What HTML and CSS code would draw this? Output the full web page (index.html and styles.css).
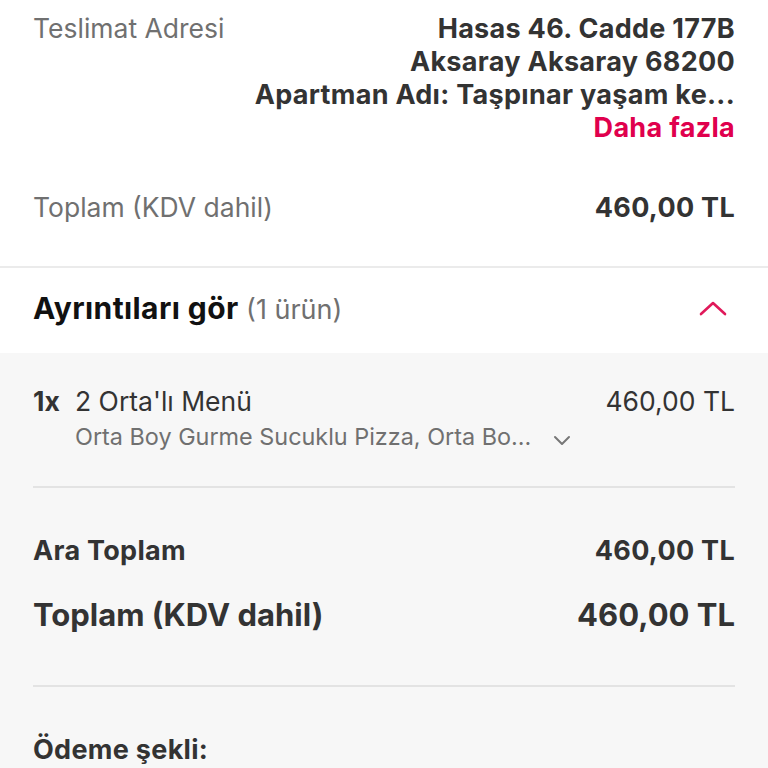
FILE: index.html
```html
<!DOCTYPE html>
<html lang="tr">
<head>
  <meta charset="UTF-8">
  <meta name="viewport" content="width=device-width, initial-scale=1.0">
  <title>Sipariş Özeti</title>
  <link rel="stylesheet" href="styles.css">
</head>
<body>
  <!-- Address & total -->
  <section class="summary">
    <div class="row address">
      <span class="label">Teslimat Adresi</span>
      <div class="address-text">
        <div>Hasas 46. Cadde 177B</div>
        <div>Aksaray Aksaray 68200</div>
        <div>Apartman Adı: Taşpınar yaşam ke...</div>
        <a class="more" href="#">Daha fazla</a>
      </div>
    </div>
    <div class="row total-top">
      <span class="label">Toplam (KDV dahil)</span>
      <span class="value">460,00 TL</span>
    </div>
  </section>

  <!-- Details toggle -->
  <div class="details-head">
    <span><b>Ayrıntıları gör</b> <span class="count">(1 ürün)</span></span>
    <svg class="chevron-up" width="28" height="16" viewBox="0 0 28 16">
      <path d="M2 14 L14 3 L26 14" fill="none" stroke="#e0195a" stroke-width="2.6" stroke-linecap="round" stroke-linejoin="round"/>
    </svg>
  </div>

  <!-- Order lines -->
  <section class="details">
    <div class="item">
      <span class="qty">1x</span>
      <div class="item-body">
        <div class="item-name">2 Orta'lı Menü</div>
        <div class="item-sub">
          <span>Orta Boy Gurme Sucuklu Pizza, Orta Bo...</span>
          <svg class="chevron-down" width="18" height="12" viewBox="0 0 18 12">
            <path d="M2 3 L9 10 L16 3" fill="none" stroke="#777" stroke-width="2" stroke-linecap="round" stroke-linejoin="round"/>
          </svg>
        </div>
      </div>
      <span class="item-price">460,00 TL</span>
    </div>
    <hr>
    <div class="row subtotal">
      <span>Ara Toplam</span>
      <span>460,00 TL</span>
    </div>
    <div class="row grand">
      <span>Toplam (KDV dahil)</span>
      <span>460,00 TL</span>
    </div>
    <hr>
    <div class="payment">Ödeme şekli:</div>
  </section>
</body>
</html>
```

FILE: styles.css
```css
html {
  font: 26.5px/33px "Inter", "Liberation Sans", sans-serif;
}
body {
  margin: 0;
  padding: 0;
  background: #fff;
  color: #333;
}
b, .strong {
  font-weight: 700;
}
.row {
  display: flex;
  justify-content: space-between;
}
.summary {
  padding: 12px 33px 42px;
}
.label {
  color: #707070;
}
.address-text {
  text-align: right;
  font-weight: 700;
  font-size: 27px;
  letter-spacing: 0.3px;
}
.more {
  color: #e0004d;
  text-decoration: none;
}
.total-top {
  margin-top: 47px;
}
.total-top .value {
  font-weight: 700;
  font-size: 27px;
  letter-spacing: 0.3px;
}
.details-head {
  border-top: 2px solid #ebebeb;
  height: 81px;
  padding: 0 33px 4px;
  display: flex;
  align-items: center;
  justify-content: space-between;
  color: #111;
}
.details-head b {
  font-size: 30px;
  letter-spacing: 0.4px;
}
.count {
  color: #707070;
  font-size: 27px;
}
.chevron-up {
  margin: 0 8px 2px 0;
}
.details {
  background: #f7f7f7;
  padding: 32px 33px 0;
  min-height: 420px;
}
.item {
  display: flex;
  align-items: flex-start;
}
.qty {
  font-weight: 700;
  width: 42px;
}
.item-body {
  flex: 1;
}
.item-sub {
  font-size: 23.4px;
  line-height: 38px;
  color: #707070;
  display: flex;
  align-items: center;
  gap: 22px;
}
.chevron-down {
  margin-top: 6px;
}
hr {
  border: 0;
  border-top: 2px solid #e3e3e3;
  margin: 0;
}
.item + hr {
  margin-top: 30px;
}
.subtotal {
  margin-top: 46px;
  font-weight: 700;
  font-size: 27px;
  letter-spacing: 0.3px;
}
.grand {
  margin-top: 30px;
  font-weight: 700;
  font-size: 31px;
  line-height: 36px;
}
.grand + hr {
  margin-top: 52px;
}
.payment {
  margin-top: 46px;
  font-weight: 700;
  font-size: 27px;
  letter-spacing: 0.3px;
}
```
